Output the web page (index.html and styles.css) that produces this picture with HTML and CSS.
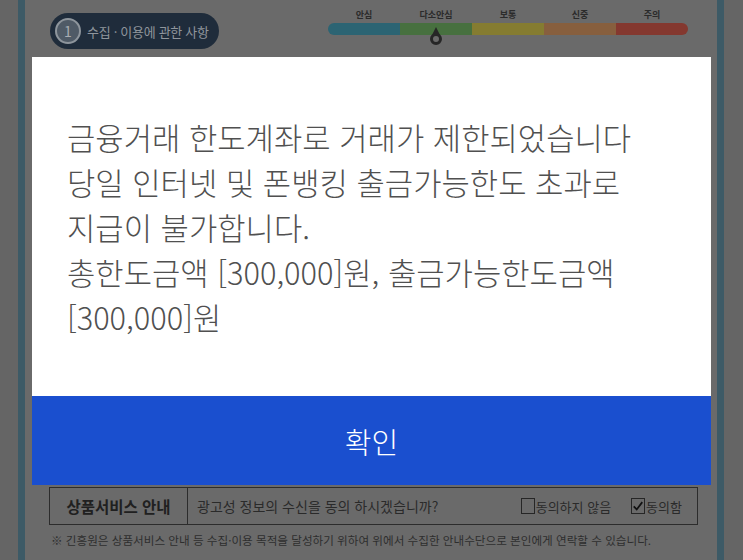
FILE: index.html
```
<!DOCTYPE html>
<html lang="ko">
<head>
    <meta charset="utf-8">
    <title>상품서비스 안내</title>
    <link rel="stylesheet" href="styles.css">
</head>
<body>
    <div class="frame">
        <div class="head">
            <div class="step">
                <span class="step-num">1</span>
                <span class="step-title">수집 · 이용에 관한 사항</span>
            </div>
            <div class="gauge">
                <div class="gauge-labels">
                    <span>안심</span>
                    <span>다소안심</span>
                    <span>보통</span>
                    <span>신중</span>
                    <span>주의</span>
                </div>
                <div class="gauge-bar">
                    <span class="seg seg-1"></span>
                    <span class="seg seg-2"><i class="pin"></i></span>
                    <span class="seg seg-3"></span>
                    <span class="seg seg-4"></span>
                    <span class="seg seg-5"></span>
                </div>
            </div>
        </div>

        <div class="dialog">
            <div class="dialog-body">
                <p>금융거래 한도계좌로 거래가 제한되었습니다<br>
                당일 인터넷 및 폰뱅킹 출금가능한도 초과로<br>
                지급이 불가합니다.<br>
                총한도금액 [300,000]원, 출금가능한도금액<br>
                [300,000]원</p>
            </div>
            <button class="dialog-btn" type="button">확인</button>
        </div>

        <div class="agree">
            <div class="agree-label">상품서비스 안내</div>
            <div class="agree-text">광고성 정보의 수신을 동의 하시겠습니까?</div>
            <label class="check"><span class="box"></span>동의하지 않음</label>
            <label class="check"><span class="box on">
                <svg width="14" height="14" viewBox="0 0 14 14"><path d="M2 7.5 L5.5 11 L12 2.5" fill="none" stroke="#111" stroke-width="2"/></svg>
            </span>동의함</label>
        </div>
        <p class="note">※ 긴흥원은 상품서비스 안내 등 수집·이용 목적을 달성하기 위하여 위에서 수집한 안내수단으로 본인에게 연락할 수 있습니다.</p>
    </div>
</body>
</html>
```

FILE: styles.css
```
body {
    margin: 0;
    background-color: #656565;
    font-family: "Noto Sans CJK KR", "Noto Sans", sans-serif;
    overflow: hidden;
}

.frame {
    margin-left: 18px;
    width: 692px;
    height: 560px;
    border-left: 7px solid #3d5a66;
    border-right: 7px solid #3d5a66;
    background-color: #6a6a6a;
}

/* top strip */
.head {
    height: 57px;
    display: flex;
    align-items: flex-start;
}

.step {
    margin: 13px 0 0 25px;
    height: 36px;
    width: 169px;
    box-sizing: border-box;
    padding-left: 5px;
    border-radius: 18px;
    background-color: #1f2c3b;
    display: flex;
    align-items: center;
    gap: 6px;
}

.step-num {
    width: 22px;
    height: 22px;
    border: 2px solid #8e959c;
    border-radius: 50%;
    background-color: #4f5a66;
    color: #a9adb2;
    font-size: 14px;
    line-height: 22px;
    text-align: center;
}

.step-title {
    color: #8f959c;
    font-size: 13px;
    letter-spacing: -0.3px;
}

.gauge {
    margin: 9px 0 0 109px;
    width: 360px;
}

.gauge-labels {
    display: flex;
    font-size: 9px;
    font-weight: bold;
    color: #2b2b2b;
    height: 14px;
    line-height: 12px;
}

.gauge-labels span {
    flex: 1;
    text-align: center;
}

.gauge-bar {
    display: flex;
    height: 12px;
    border-radius: 6px;
}

.seg {
    flex: 1;
    position: relative;
}

.seg-1 { background-color: #2c6473; border-radius: 6px 0 0 6px; }
.seg-2 { background-color: #47703f; }
.seg-3 { background-color: #857c31; }
.seg-4 { background-color: #875f3e; }
.seg-5 { background-color: #84382f; border-radius: 0 6px 6px 0; }

.pin {
    position: absolute;
    left: 30px;
    top: 10px;
    width: 6px;
    height: 6px;
    border: 3px solid #262626;
    border-radius: 50%;
    background-color: #6a6a6a;
}

.pin::before {
    content: "";
    position: absolute;
    left: -1px;
    top: -9px;
    border-left: 4px solid transparent;
    border-right: 4px solid transparent;
    border-bottom: 8px solid #262626;
}

/* dialog */
.dialog {
    margin-left: 7px;
    width: 679px;
}

.dialog-body {
    background-color: #fff;
    height: 339px;
    box-sizing: border-box;
    padding: 57px 0 0 35px;
}

.dialog-body p {
    margin: 0;
    font-size: 30.8px;
    font-weight: 300;
    line-height: 45px;
    color: #505050;
}

.dialog-btn {
    display: block;
    width: 100%;
    height: 89px;
    border: none;
    background-color: #1a4fcf;
    color: #fff;
    font-family: inherit;
    font-size: 29px;
    font-weight: 300;
    padding: 0;
}

/* agree row */
.agree {
    margin: 2px 0 0 24px;
    width: 647px;
    height: 36px;
    border: 1px solid #2c2c2c;
    display: flex;
    align-items: center;
    font-size: 14px;
    color: #2a2a2a;
}

.agree-label {
    width: 137px;
    height: 100%;
    border-right: 1px solid #2c2c2c;
    font-size: 15.5px;
    font-weight: bold;
    color: #202020;
    display: flex;
    align-items: center;
    justify-content: center;
}

.agree-text {
    flex: 1;
    padding-left: 9px;
}

.check {
    display: flex;
    align-items: center;
    font-size: 13px;
    margin-right: 15px;
}

.check:first-of-type {
    margin-right: 20px;
}

.box {
    width: 12px;
    height: 14px;
    border: 1px solid #262626;
    margin-right: 1px;
    display: flex;
    align-items: center;
    justify-content: center;
}

.note {
    margin: 7px 0 0 26px;
    font-size: 11.6px;
    color: #2e2e2e;
}
```
